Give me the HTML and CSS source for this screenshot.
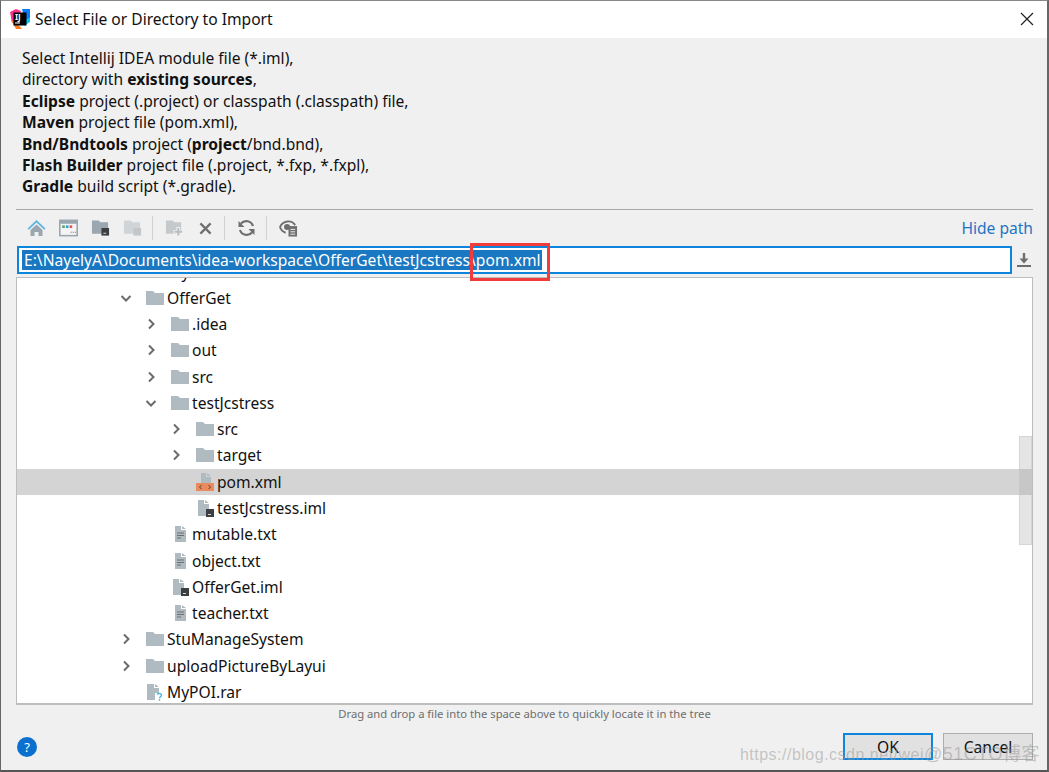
FILE: index.html
```html
<!doctype html>
<html lang="en">
<head>
    <meta charset="utf-8">
    <title>Select File or Directory to Import</title>
    <link rel="stylesheet" href="styles.css">
</head>
<body>
    <svg class="sprite" xmlns="http://www.w3.org/2000/svg">
        <symbol id="folder" viewBox="0 0 18 16"><path d="M0 1h7l2 2h9v12H0z" fill="#b0bac1"/></symbol>
        <symbol id="open" viewBox="0 0 12 12"><path d="M4 1.500 8.500 6 4 10.500" fill="none" stroke="#6b6b6b" stroke-width="2"/></symbol>
        <symbol id="down" viewBox="0 0 12 12"><path d="M1.500 4 6 8.500 10.500 4" fill="none" stroke="#6b6b6b" stroke-width="2"/></symbol>
        <symbol id="text" viewBox="0 0 16 18"><path d="M3 1h6v4h5v12H3zM10 1l4 3h-4z" fill="#b0bac1"/><path d="M5 8h7M5 10.500h7M5 13h4" stroke="#6e6e6e" stroke-width="1.200"/></symbol>
        <symbol id="iml" viewBox="0 0 18 18"><path d="M2 1h6v4h5v12H2zM9 1l4 3H9z" fill="#b0bac1"/><path d="M10 10h8v8h-8z" fill="#3c3f41"/><path d="M12 15.500h3" stroke="#ddd"/></symbol>
        <symbol id="unknown" viewBox="0 0 18 18"><path d="M1 1h7v4h5v12H1zM9 1l4 3H9z" fill="#b0bac1"/><path d="M9 10h9v8H9z" fill="#fff"/><path d="M11 11.500c.5-1.500 4.500-1.500 4.500.7 0 1.500-2 1.500-2 3" fill="none" stroke="#40b6e0" stroke-width="1.400"/><path d="M12.800 16.200h1.400v1.600h-1.400z" fill="#40b6e0"/></symbol>
        <symbol id="pom" viewBox="0 0 18 18"><path d="M5 0h5v4h5v7H5zM11 0l4 3h-4z" fill="#b0bac1"/><path d="M0 10h18v8H0z" fill="#e98a5f"/><path d="M5.500 12 3.500 14l2 2M12.500 12l2 2-2 2" fill="none" stroke="#5a3a2a"/></symbol>
    </svg>

    <div class="dialog">
        <div class="title-bar">
            <svg class="logo" viewBox="0 0 20 20">
                <path d="M0 3 6 0l5 2-3 8-6 4z" fill="#fc318c"/>
                <path d="M12 0h8v9l-5 3z" fill="#087cfa"/>
                <path d="M1 11 6 20h6l-6-7z" fill="#fe7a16"/>
                <path d="M14 17l6-4v-4l-6 2z" fill="#07c3f2"/>
                <rect x="3.500" y="3.500" width="13" height="13" fill="#000"/>
                <rect x="5" y="13.500" width="5" height="1" fill="#fff"/>
                <text x="5" y="11" class="logo-text">IJ</text>
            </svg>
            <span class="title-text">Select File or Directory to Import</span>
            <svg class="close" viewBox="0 0 14 14"><path d="M1 1l12 12M13 1 1 13" stroke="#222" stroke-width="1.200"/></svg>
        </div>

        <div class="content">
            <div class="intro">
                Select Intellij IDEA module file (*.iml),<br>
                directory with <b>existing sources</b>,<br>
                <b>Eclipse</b> project (.project) or classpath (.classpath) file,<br>
                <b>Maven</b> project file (pom.xml),<br>
                <b>Bnd/Bndtools</b> project (<b>project</b>/bnd.bnd),<br>
                <b>Flash Builder</b> project file (.project, *.fxp, *.fxpl),<br>
                <b>Gradle</b> build script (*.gradle).
            </div>

            <div class="toolbar">
                <span class="tool"><svg viewBox="0 0 18 18"><path d="M9 1 0 9.500l1.300 1.300L9 3.500l7.700 7.300L18 9.500z" fill="#5fb4e0"/><path d="M3 11 9 5.500l6 5.500v6h-4v-4H7v4H3z" fill="#9aa7b0"/></svg></span>
                <span class="tool"><svg viewBox="0 0 18 16"><rect x=".75" y=".75" width="16.500" height="14.500" fill="#f4f4f4" stroke="#9aa7b0" stroke-width="1.500"/><path d="M1 1h16v3H1z" fill="#9aa7b0"/><rect x="3" y="5.500" width="2.500" height="2.500" fill="#59a869"/><rect x="6.500" y="5.500" width="2.500" height="2.500" fill="#389fd6"/><rect x="10" y="5.500" width="2.500" height="2.500" fill="#e05555"/><path d="M11 12h1M13 12h1M15 12h1" stroke="#777"/></svg></span>
                <span class="tool"><svg viewBox="0 0 20 18"><path d="M1 1h7l2 2h8v12H1z" fill="#9aa7b0"/><rect x="11" y="9" width="8" height="8" fill="#3c3f41"/><path d="M13 14.500h3" stroke="#ddd"/></svg></span>
                <span class="tool"><svg viewBox="0 0 20 18"><path d="M1 1h7l2 2h8v12H1z" fill="#d0d4d7"/><rect x="11" y="9" width="8" height="8" fill="#c4c7c9"/></svg></span>
                <span class="tool-sep"></span>
                <span class="tool"><svg viewBox="0 0 20 18"><path d="M1 1h7l2 2h7v12H1z" fill="#c4c9cc"/><path d="M14 8v10M9 13h10" stroke="#f0f0f0" stroke-width="4"/><path d="M14 9v8M10 13h8" stroke="#b9bdbf" stroke-width="2"/></svg></span>
                <span class="tool tool-small"><svg viewBox="0 0 14 14"><path d="M1.500 1.500l11 11M12.500 1.500l-11 11" stroke="#6e6e6e" stroke-width="2.400"/></svg></span>
                <span class="tool-sep"></span>
                <span class="tool"><svg viewBox="0 0 18 18"><path d="M15.500 7A7 7 0 0 0 3.500 4.500M2.500 11a7 7 0 0 0 12 2.500" fill="none" stroke="#6e6e6e" stroke-width="2.200"/><path d="M1 2v6h6zM17 16v-6h-6z" fill="#6e6e6e"/></svg></span>
                <span class="tool-sep"></span>
                <span class="tool"><svg viewBox="0 0 20 18"><path d="M1 8c3-7 12-8 16-2" fill="none" stroke="#6e6e6e" stroke-width="2"/><path d="M1 8c1 3 3 5 6 6" fill="none" stroke="#6e6e6e" stroke-width="2"/><circle cx="8.500" cy="8" r="3.200" fill="#6e6e6e"/><rect x="10" y="7" width="9" height="11" fill="#6e6e6e"/><path d="M12 10.500h5M12 13h5M12 15.500h5" stroke="#f0f0f0"/></svg></span>
                <a class="hide-path">Hide path</a>
            </div>

            <div class="path-row">
                <div class="path-box">
                    <span class="path-selected">E:\NayelyA\Documents\idea-workspace\OfferGet\testJcstress\pom.xml</span>
                    <div class="annotation"></div>
                </div>
                <svg class="path-download" viewBox="0 0 14 14"><path d="M7 0v7" stroke="#6e6e6e" stroke-width="2.400"/><path d="M2.500 5.500h9L7 10.500z" fill="#6e6e6e"/><path d="M0 13h14" stroke="#6e6e6e" stroke-width="2"/></svg>
            </div>

            <div class="tree">
                <div class="tree-rows">
                    <div class="row depth-0"><span class="arrow"></span><span class="ico"></span>my</div>
                    <div class="row depth-0"><svg class="arrow"><use href="#down"/></svg><svg class="ico"><use href="#folder"/></svg>OfferGet</div>
                    <div class="row depth-1"><svg class="arrow"><use href="#open"/></svg><svg class="ico"><use href="#folder"/></svg>.idea</div>
                    <div class="row depth-1"><svg class="arrow"><use href="#open"/></svg><svg class="ico"><use href="#folder"/></svg>out</div>
                    <div class="row depth-1"><svg class="arrow"><use href="#open"/></svg><svg class="ico"><use href="#folder"/></svg>src</div>
                    <div class="row depth-1"><svg class="arrow"><use href="#down"/></svg><svg class="ico"><use href="#folder"/></svg>testJcstress</div>
                    <div class="row depth-2"><svg class="arrow"><use href="#open"/></svg><svg class="ico"><use href="#folder"/></svg>src</div>
                    <div class="row depth-2"><svg class="arrow"><use href="#open"/></svg><svg class="ico"><use href="#folder"/></svg>target</div>
                    <div class="row depth-2 selected"><span class="arrow"></span><svg class="ico"><use href="#pom"/></svg>pom.xml</div>
                    <div class="row depth-2"><span class="arrow"></span><svg class="ico"><use href="#iml"/></svg>testJcstress.iml</div>
                    <div class="row depth-1"><span class="arrow"></span><svg class="ico"><use href="#text"/></svg>mutable.txt</div>
                    <div class="row depth-1"><span class="arrow"></span><svg class="ico"><use href="#text"/></svg>object.txt</div>
                    <div class="row depth-1"><span class="arrow"></span><svg class="ico"><use href="#iml"/></svg>OfferGet.iml</div>
                    <div class="row depth-1"><span class="arrow"></span><svg class="ico"><use href="#text"/></svg>teacher.txt</div>
                    <div class="row depth-0"><svg class="arrow"><use href="#open"/></svg><svg class="ico"><use href="#folder"/></svg>StuManageSystem</div>
                    <div class="row depth-0"><svg class="arrow"><use href="#open"/></svg><svg class="ico"><use href="#folder"/></svg>uploadPictureByLayui</div>
                    <div class="row depth-0"><span class="arrow"></span><svg class="ico"><use href="#unknown"/></svg>MyPOI.rar</div>
                </div>
                <div class="scroll-thumb"></div>
            </div>

            <div class="hint">Drag and drop a file into the space above to quickly locate it in the tree</div>

            <div class="footer">
                <span class="help">?</span>
                <button class="btn btn-default">OK</button>
                <button class="btn">Cancel</button>
            </div>
        </div>
        <div class="watermark">https://blog.csdn.net/wei<span class="watermark-end">@51CTO博客</span></div>
    </div>
</body>
</html>
```

FILE: styles.css
```css
* {
    box-sizing: border-box;
    font-family: "Noto Sans", "Noto Sans CJK SC", sans-serif;
}
body {
    margin: 0;
    background: #f0f0f0;
    color: #111;
    font-size: 15.6px;
    overflow: hidden;
}
.sprite {
    display: none;
}
.dialog {
    position: relative;
    height: 772px;
    border-left: 1px solid #666;
    border-right: 2px solid #666;
    border-top: 1px solid #888;
    border-bottom: 2px solid #555;
    overflow: hidden;
}

/* Title bar */
.title-bar {
    height: 37px;
    background: #fff;
    display: flex;
    align-items: center;
    padding: 0 0 2px 9px;
}
.logo {
    width: 20px;
    height: 20px;
    margin-right: 5px;
}
.logo-text {
    fill: #fff;
    font-size: 8px;
    font-weight: 700;
}
.title-text {
    flex: 1;
}
.close {
    width: 14px;
    height: 14px;
    margin-right: 13px;
}

/* Body */
.content {
    padding: 0 14px 0 15px;
}
.intro {
    padding: 10px 0 0 6px;
    line-height: 21.4px;
    border-bottom: 1px solid #a8a8a8;
    height: 172px;
}
.toolbar {
    height: 36px;
    display: flex;
    align-items: center;
    padding-left: 4px;
}
.tool {
    width: 32px;
    display: flex;
    justify-content: center;
    align-items: center;
}
.tool svg {
    width: 19px;
    height: 18px;
}
.tool-small {
    width: 30px;
}
.tool-small svg {
    width: 13px;
    height: 13px;
}
.tool-sep {
    width: 1px;
    height: 24px;
    background: #d0d0d0;
    margin: 0 5px 0 4px;
}
.hide-path {
    margin-left: auto;
    color: #1f74c4;
}
.path-row {
    display: flex;
    align-items: center;
    height: 28px;
    padding-left: 1px;
}
.path-box {
    position: relative;
    z-index: 1;
    flex: none;
    width: 995px;
    height: 28px;
    border: 2px solid #0f84dd;
    background: #fff;
    padding: 2px 0 0 3px;
    display: flex;
    align-items: flex-start;
}
.path-selected {
    background: #1a78c2;
    color: #fff;
    height: 20px;
    line-height: 20px;
    padding: 0 1px 0 2px;
}
.annotation {
    position: absolute;
    left: 451px;
    top: -5px;
    width: 80px;
    height: 38px;
    border: 3px solid #f13c3c;
}
.path-download {
    width: 14px;
    height: 14px;
    margin-left: 5px;
}

/* Tree */
.tree {
    position: relative;
    height: 428px;
    margin-top: 3px;
    background: #fff;
    border: 1px solid #bdbdbd;
    border-bottom-width: 2px;
    overflow: hidden;
}
.tree-rows {
    margin-top: -19.5px;
}
.row {
    height: 26.27px;
    display: flex;
    align-items: center;
    white-space: nowrap;
}
.depth-0 {
    padding-left: 103px;
}
.depth-1 {
    padding-left: 128px;
}
.depth-2 {
    padding-left: 153px;
}
.selected {
    background: #d4d4d4;
}
.arrow {
    width: 12px;
    height: 12px;
    margin-right: 14px;
    flex: none;
}
.ico {
    width: 18px;
    height: 18px;
    margin-right: 3px;
    flex: none;
}
.scroll-thumb {
    position: absolute;
    right: 0;
    top: 158px;
    width: 13px;
    height: 109px;
    background: rgba(170, 170, 170, 0.3);
    border: 1px solid rgba(200, 200, 200, 0.5);
}

/* Footer */
.hint {
    text-align: center;
    font-size: 11.25px;
    color: #6e6e6e;
    height: 19px;
    line-height: 18px;
}
.footer {
    display: flex;
    align-items: center;
    padding-top: 9px;
    justify-content: flex-end;
    gap: 10px;
}
.help {
    width: 20px;
    height: 20px;
    border-radius: 50%;
    background: #0a6fcf;
    color: #fff;
    font-size: 13px;
    line-height: 20px;
    text-align: center;
    margin: 0 auto 0 1px;
}
.btn {
    width: 90px;
    height: 27px;
    background: #e1e1e1;
    border: 1px solid #adadad;
    font-size: 15.6px;
    color: #111;
    padding: 0;
}
.btn-default {
    border: 2px solid #0f84dd;
}
.watermark {
    position: absolute;
    right: 7px;
    bottom: 5px;
    font-family: "Liberation Sans", "Noto Sans CJK SC", sans-serif;
    font-size: 16px;
    color: rgba(150, 150, 150, 0.5);
    letter-spacing: 0.5px;
}
.watermark-end {
    font-family: "Liberation Sans", "Noto Sans CJK SC", sans-serif;
    font-size: 18px;
}
```
